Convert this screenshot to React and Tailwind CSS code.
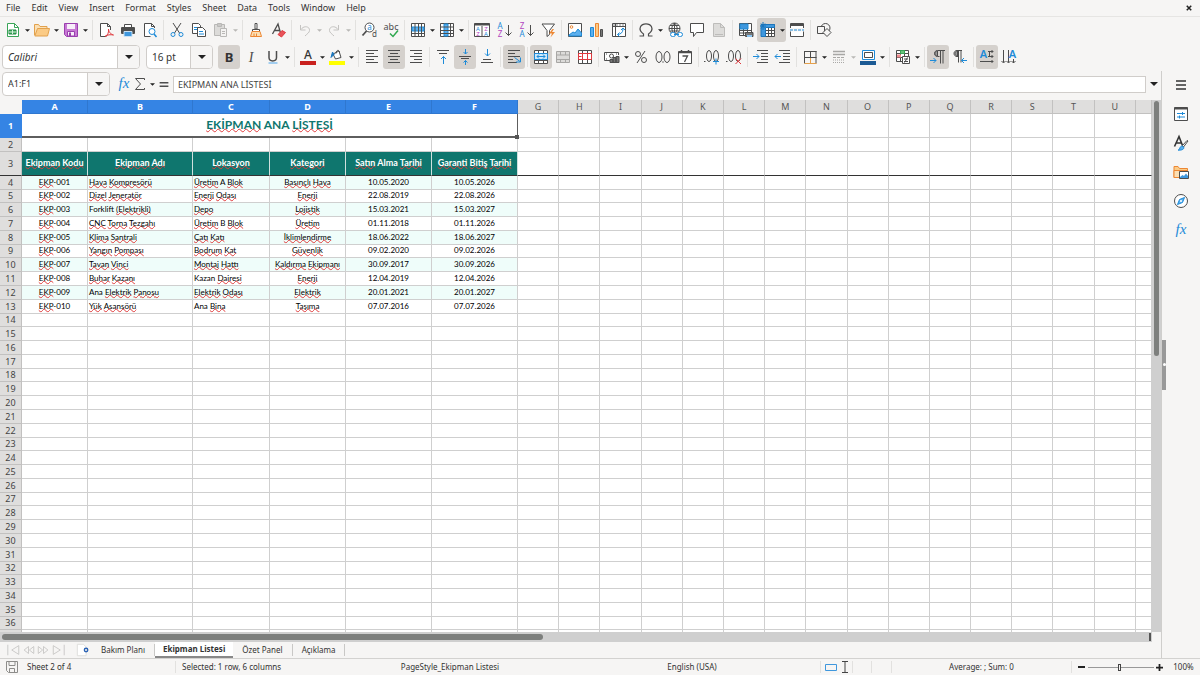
import { Fragment } from 'react';
import clsx from 'clsx';

const INK = '#4d4d4d';
const BLUE = '#1e8bd8';
const RED = '#e0393e';
const ORANGE = '#ed8733';
const PURPLE = '#b144c0';

const MENUS = ['File', 'Edit', 'View', 'Insert', 'Format', 'Styles', 'Sheet', 'Data', 'Tools', 'Window', 'Help'];

const Glyph = ({ x = 8, y = 12, size = 12, fill = INK, children, ...rest }) => (
  <text x={x} y={y} fontSize={size} fill={fill} stroke="none" textAnchor="middle" {...rest}>
    {children}
  </text>
);

const ICONS = {
  new: (
    <>
      <path d="M2.500 1.500h7l4 4v9h-11z" fill="#fff" stroke="#3aa558" />
      <path d="M9.500 1.500v4h4" stroke="#3aa558" />
      <path d="M4 8h7v4H4z" fill="#3aa558" stroke="#1f8a41" />
      <path d="M4 10h7M7.500 8v4" stroke="#d5f0dc" />
    </>
  ),
  open: (
    <>
      <path d="M.5 13V2.500h4l1.500 2h7V7" fill="#fbe0b5" stroke="#e2a14c" />
      <path d="M3.500 6.500h12l-2 7.500H.8z" fill="#fbcb86" stroke="#e2a14c" />
    </>
  ),
  save: (
    <>
      <path d="M1.500 1.500h13v13h-11l-2-2z" fill="#c778d4" stroke="#9a3fae" />
      <path d="M4 2h8v5H4z" fill="#f7eef9" stroke="none" />
      <path d="M4.500 14V9.500h7V14z" fill="#f7eef9" stroke="#9a3fae" />
      <path d="M6 10.500h2V14H6z" fill="#9a3fae" stroke="none" />
    </>
  ),
  pdf: (
    <>
      <path d="M12.500 8V4.500l-3-3h-7v13h6" fill="#fff" />
      <path d="M9.500 1.500v3h3" />
      <path d="M7 14.500c3-1 4-5 3.500-7.500.5 4 2.500 5 5 6-3-.5-6-.5-8.500 1.500z" stroke={RED} />
    </>
  ),
  print: (
    <>
      <path d="M4.500 5V2.500h7V5" fill="#fff" />
      <rect x="1" y="5" width="14" height="7" rx="1" fill="#4d4d4d" stroke="none" />
      <path d="M4 9.500h8v5H4z" fill="#3f97dd" stroke="#c9e1f4" />
    </>
  ),
  preview: (
    <>
      <path d="M12.500 6V4.500l-3-3h-7v13h6" fill="#fff" />
      <path d="M9.500 1.500v3h3" />
      <circle cx="10" cy="9.500" r="3" fill="#fff" stroke={BLUE} />
      <path d="M12 12l2.500 3" stroke={BLUE} strokeWidth="1.500" />
    </>
  ),
  cut: (
    <>
      <path d="M4 1l6.500 10M12 1L5.500 11" />
      <circle cx="4" cy="12.500" r="2" stroke={BLUE} />
      <circle cx="12" cy="12.500" r="2" stroke={BLUE} />
    </>
  ),
  copy: (
    <>
      <path d="M1.500 1.500h6l2 2v8h-8z" fill="#fff" />
      <path d="M3 5.500h4M3 7.500h3" stroke={BLUE} />
      <path d="M6.500 5.500h5l3 3v6h-8z" fill="#fff" />
      <path d="M8 9.500h4M8 12h5" stroke={BLUE} />
    </>
  ),
  paste: (
    <g stroke="#b9b8b6">
      <path d="M1.500 2.500h10v11h-10z" fill="#dcdbd9" />
      <path d="M4.500 1.500h4v3h-4z" fill="#c9c8c6" />
      <path d="M7.500 6.500h6v8h-6z" fill="#f4f3f2" />
      <path d="M9 9.500h3M9 11.500h3" />
    </g>
  ),
  brush: (
    <>
      <path d="M7 1.500h2V7H7z" fill="#fff" />
      <path d="M4.500 7.500h7v2h-7z" fill="#fff" />
      <path d="M4 9.500h8l1.500 5h-11z" fill="#fbdfb4" stroke={ORANGE} />
      <path d="M6 14.500v-3M8.500 14.500v-3" stroke={ORANGE} />
    </>
  ),
  clear: (
    <>
      <path d="M2.500 12L8 2l2.500 9M4.500 8.500h5" strokeWidth="1.300" />
      <path d="M8 12.500l4-4 3.500 2-4 4.500z" fill="#e8535a" stroke={RED} />
    </>
  ),
  undo: <path d="M3.500 3v5h5M4 7.500C7 3 13 4.500 12.500 8.500c0 2-2 3-4.500 5.500" stroke="#c4c3c1" />,
  redo: <path d="M12.500 3v5h-5M12 7.500C9 3 3 4.500 3.500 8.500c0 2 2 3 4.500 5.500" stroke="#c4c3c1" />,
  find: (
    <>
      <circle cx="8.500" cy="5.500" r="4.500" fill="#fff" />
      <path d="M5.500 9L1.500 13.500" strokeWidth="1.800" />
      <Glyph x="8.500" y="8" size="8" fill={BLUE}>a</Glyph>
      <Glyph x="13.500" y="15" size="8">d</Glyph>
    </>
  ),
  spell: (
    <>
      <Glyph y="8" size="9">abc</Glyph>
      <path d="M7 11.500l3 3L15 8.500" stroke="#2fa84f" strokeWidth="1.500" />
    </>
  ),
  row: (
    <>
      <path d="M1.500 1.500h13v13h-13z" fill="#fff" />
      <path d="M2 5h12v4H2z" fill="#5db0ee" stroke={BLUE} />
      <path d="M5 2v12M8.500 2v12M11.500 2v12M2 11.500h12" />
    </>
  ),
  column: (
    <>
      <path d="M1.500 1.500h13v13h-13z" fill="#fff" />
      <path d="M5 2h4v12H5z" fill="#5db0ee" stroke={BLUE} />
      <path d="M2 5h12M2 8.500h12M2 11.500h12M11.500 2v12" />
    </>
  ),
  sort: (
    <>
      <path d="M.5 1.500h15v13H.5zM8 4v10" fill="#fff" />
      <path d="M.5 2.500h15" strokeWidth="2" />
      <Glyph x="4" y="9" size="6" fill={BLUE}>A</Glyph>
      <Glyph x="4" y="14" size="6" fill={PURPLE}>Z</Glyph>
      <Glyph x="12" y="9" size="6" fill={PURPLE}>Z</Glyph>
      <Glyph x="12" y="14" size="6" fill={BLUE}>A</Glyph>
    </>
  ),
  sortAsc: (
    <>
      <Glyph x="4" y="7" size="8" fill={BLUE}>A</Glyph>
      <Glyph x="4" y="15" size="8" fill={PURPLE}>Z</Glyph>
      <path d="M12.500 3v10.500M9.500 10.500l3 3 3-3" />
    </>
  ),
  sortDesc: (
    <>
      <Glyph x="4" y="7" size="8" fill={PURPLE}>Z</Glyph>
      <Glyph x="4" y="15" size="8" fill={BLUE}>A</Glyph>
      <path d="M12.500 3v10.500M9.500 10.500l3 3 3-3" />
    </>
  ),
  filter: (
    <>
      <path d="M2 2h12.500L9.500 8.500v4l-2.500 2v-6z" fill="#fff" />
      <path d="M12.500 7L9 11.500h3L10.500 15.500l4.500-5.500h-3l2-3z" fill={ORANGE} stroke="none" />
    </>
  ),
  image: (
    <>
      <path d="M1.500 1.500h13v13h-13z" fill="#fff" />
      <circle cx="4.500" cy="5" r="1.300" stroke={ORANGE} />
      <path d="M2 13l4-3 2 1 3-4 3.500 4v3H2z" fill="#5db0ee" stroke={BLUE} />
    </>
  ),
  chart: (
    <>
      <path d="M1.500 5.500h3v9h-3z" fill="#5db0ee" stroke={BLUE} />
      <path d="M6.500 1.500h3v13h-3z" fill="#fbcb86" stroke={ORANGE} />
      <path d="M11.500 7.500h2v7h-2z" fill="#777" />
    </>
  ),
  pivot: (
    <>
      <path d="M1.500 1.500h13v13h-13zM4.500 2v12M2 4.500h12" fill="#fff" />
      <path d="M2 3h12" stroke="#888" strokeDasharray="2 1" />
      <path d="M6.500 12.500c3 0 5.500-2 5.500-5.500M10 8l2-2 2 2M8.500 10.500l-2 2 2 2" stroke={BLUE} />
    </>
  ),
  omega: <path d="M1.500 14h4v-2C2 9.500 1.500 7 2.500 4.800c2-4 9-4 11 0 1 2.200.5 4.700-3 7.200v2h4" strokeWidth="1.200" />,
  link: (
    <>
      <circle cx="7.500" cy="6.500" r="5.500" fill="#fff" />
      <path d="M2 6.500h11M7.500 1v11M3 3.500h9M3 9h9M7.500 1c-3.500 3-3.500 8 0 11 3.500-3 3.500-8 0-11" />
      <rect x="3.500" y="10.500" width="5" height="4" rx="2" fill="#fff" stroke={BLUE} />
      <rect x="10.500" y="10.500" width="5" height="4" rx="2" fill="#fff" stroke={BLUE} />
      <path d="M7 12.500h5" stroke={BLUE} />
    </>
  ),
  comment: <path d="M1.500 1.500h13v9h-7l-3 4v-4h-3z" fill="#fff" />,
  page: (
    <g stroke="#bdbcba">
      <path d="M2.500 1.500h7l4 4v9h-11z" fill="#dddcda" />
      <path d="M9.500 1.500v4h4M4 12.500h8" />
    </g>
  ),
  printRange: (
    <>
      <path d="M1.500 1.500h12v12h-12zM5.500 2v11M9.500 2v11M2 8.500h11M2 11h11" fill="#fff" />
      <path d="M2 2h8v5H2z" fill="#3f97dd" stroke={BLUE} />
      <path d="M7.500 10.500h7.500v4H7.500z" fill="#777" />
      <path d="M9 13h5v2H9z" fill="#8cc6f3" stroke="none" />
    </>
  ),
  freeze: (
    <>
      <path d="M1.500 2.500h13v12h-13zM8.500 3v11M11.500 3v11M2 8.500h12M2 11.500h12" fill="#fff" />
      <path d="M1 2.500h13.500v3H5.500v9H1z" fill="#3f97dd" stroke="#1b76bd" />
      <path d="M3 0v8M0 4h6M1 1.500l4 5M5 1.500l-4 5" stroke="#1b76bd" />
    </>
  ),
  split: (
    <>
      <path d="M1.500 6V1.500h13V6M1.500 9.500v5h13v-5" fill="#fff" />
      <path d="M1.500 3h13" strokeWidth="2" />
      <path d="M1 8h14" stroke={BLUE} strokeDasharray="3 1" />
    </>
  ),
  shapes: (
    <>
      <circle cx="9.500" cy="6" r="4.500" />
      <path d="M1.500 4.500h7v7h-7z" fill="#f6f5f4" />
      <path d="M11 6.500l4 4-4 4-4-4z" fill="#f6f5f4" />
    </>
  ),
  bold: <Glyph y="13" size="13" fontWeight="700" fill="#333">B</Glyph>,
  italic: <Glyph y="13" size="14" fontStyle="italic" fontFamily="Liberation Serif, serif">I</Glyph>,
  underline: (
    <>
      <path d="M4 2v6.500c0 4.500 7.500 4.500 7.500 0V2" strokeWidth="1.500" />
      <path d="M3.500 14h9" stroke="#6cb4ec" strokeWidth="1.200" />
    </>
  ),
  fontColor: (
    <>
      <Glyph y="10" size="12" fill="#333" fontWeight="500">A</Glyph>
      <path d="M0 12h16v4H0z" fill="#c9211e" stroke="none" />
    </>
  ),
  fill: (
    <>
      <path d="M4 5l6-3 2 6.500L6.500 10z" fill="#fff" />
      <path d="M7 4.500c0-4 3.500-4 3.500-1" />
      <path d="M3.500 3L2 8.500 5 5.500z" fill="#1b76bd" stroke="#1b76bd" />
      <path d="M0 12h16v4H0z" fill="#ffff00" stroke="none" />
    </>
  ),
  left: <path d="M2 1.500h12M2 4.500h8M2 7.500h12M2 10.500h8M2 13.500h12" />,
  center: <path d="M2 1.500h12M4 4.500h8M2 7.500h12M4 10.500h8M2 13.500h12" />,
  right: <path d="M2 1.500h12M6 4.500h8M2 7.500h12M6 10.500h8M2 13.500h12" />,
  top: (
    <>
      <path d="M2 1.500h12M4 4.500h8" />
      <path d="M8.500 15V7.500M6 10l2.500-2.500L11 10" stroke={BLUE} />
    </>
  ),
  middle: (
    <>
      <path d="M2 7.500h12M4 9.500h8" />
      <path d="M8.500 0v5M6.500 3l2 2 2-2M8.500 16v-4.500M6.500 13.500l2-2 2 2" stroke={BLUE} />
    </>
  ),
  bottom: (
    <>
      <path d="M2 13.500h12M4 10.500h8" />
      <path d="M8.500 0v7M6 4.500L8.500 7 11 4.500" stroke={BLUE} />
    </>
  ),
  wrap: (
    <>
      <path d="M2 1.500h12M2 4.500h7M2 7.500h12M2 10.500h5M2 13.500h9" />
      <path d="M8.500 8.500l5.500 4M14.500 8.500v4.500H10" stroke={BLUE} />
    </>
  ),
  merge: (
    <>
      <path d="M1.500 1.500h13v13h-13zM5.500 2v12M10.500 2v12M2 11.500h12" fill="#fff" />
      <path d="M1.500 4.500h13v6h-13z" fill="#cde8fb" stroke={BLUE} />
      <path d="M4 7.500h8M6 5.500l-2 2 2 2M10 5.500l2 2-2 2" stroke={BLUE} />
    </>
  ),
  mergeCells: <path d="M1.500 2.500h13v11h-13zM2 6h12M2 10.500h12M5.500 2v4M10.500 2v4M5.500 11v3M10.500 11v3" fill="#dcdbd9" stroke="#a8a7a5" />,
  unmerge: (
    <>
      <path d="M1.500 1.500h13v13h-13zM5.500 2v12M10.500 2v12" fill="#fff" />
      <path d="M1.500 4.500h13v6h-13zM5.500 5v5M10.500 5v5M1.500 7.500h3" stroke={RED} />
    </>
  ),
  currency: (
    <>
      <path d="M14.500 6V3.500h-14v8h6" fill="#fff" />
      <circle cx="7.500" cy="7" r="2" />
      <path d="M2 5h1M2 10h1M12 5h1" />
      <path d="M6 10.500h3v3H6zM9 8.500h3v5H9zM12 7.500h3v6h-3z" fill="#777" />
    </>
  ),
  percent: (
    <>
      <circle cx="5" cy="5" r="2.500" />
      <circle cx="11" cy="11" r="2.500" />
      <path d="M12 2L4 14" />
    </>
  ),
  number: (
    <>
      <ellipse cx="4" cy="8" rx="3" ry="5.500" />
      <ellipse cx="12" cy="8" rx="3" ry="5.500" />
      <path d="M7.500 13h1" strokeWidth="1.500" />
    </>
  ),
  date: (
    <>
      <path d="M1.500 2.500h13v12h-13z" fill="#fff" />
      <path d="M1.500 3.500h13M4.500 1v3M11.500 1v3" strokeWidth="1.500" />
      <path d="M5.500 7h5L7.500 13" strokeWidth="1.300" />
    </>
  ),
  addDecimal: (
    <>
      <path d="M0 12.500h1.500" />
      <ellipse cx="5" cy="7" rx="2.500" ry="5.500" />
      <ellipse cx="12" cy="7" rx="2.500" ry="5.500" />
      <path d="M9 12.500h6M12 9.500v6" stroke={BLUE} />
    </>
  ),
  delDecimal: (
    <>
      <path d="M0 12.500h1.500" />
      <ellipse cx="5" cy="7" rx="2.500" ry="5.500" />
      <ellipse cx="12" cy="7" rx="2.500" ry="5.500" />
      <path d="M9.500 9.500l5.500 5.500M15 9.500L9.500 15" stroke={RED} />
    </>
  ),
  indent: (
    <>
      <path d="M4 1.500h11M8 4.500h7M8 7.500h7M8 10.500h7M4 13.500h11" />
      <path d="M0 7.500h6M3.500 5L6 7.500 3.500 10" stroke={BLUE} />
    </>
  ),
  outdent: (
    <>
      <path d="M4 1.500h11M8 4.500h7M8 7.500h7M8 10.500h7M4 13.500h11" />
      <path d="M0 7.500h6M2.500 5L0 7.500 2.500 10" stroke={BLUE} />
    </>
  ),
  borders: (
    <>
      <path d="M2.500 2v12.500M14 2v12.500M8.500 2v12.500M2.500 8.500h12" />
      <path d="M2 2.500h12.500" />
      <path d="M8.500 9v5M2.500 14.500h12" stroke="#e5a04b" />
    </>
  ),
  borderStyle: (
    <g stroke="#a8a7a5">
      <path d="M2 2.500h12M2 5.500h12" strokeWidth="1.500" />
      <path d="M2 8.500h12" strokeDasharray="3 1" />
      <path d="M2 11h12M2 13.500h12" strokeDasharray="1 1" />
    </g>
  ),
  borderColor: (
    <>
      <path d="M2.500 1.500h12v9h-12z" fill="#fff" stroke={BLUE} />
      <path d="M4.500 3.500h8v5h-8z" />
      <path d="M0 12h16v4H0z" fill="#1c5a94" stroke="none" />
    </>
  ),
  conditional: (
    <>
      <path d="M1.500 1.500h12v11h-12zM2 4.500h11M2 8.500h11M5.500 2v10M9.500 2v10" fill="#fff" />
      <path d="M5.500 1.500h4v3h-4z" fill="#69c27c" stroke="#3aa558" />
      <path d="M2 5.500h4v3H2z" fill="#f08b8e" stroke="none" />
      <path d="M7.500 7.500h7v7h-7z" fill="#fff" />
      <path d="M9 10h4M9 12.500h4M12.500 8.500l-3 5" />
    </>
  ),
  ltr: (
    <>
      <path d="M15 1.500H7.500c-4 0-4 6 0 6h2M10.500 1.500v13M13 1.500v13" />
      <path d="M7.500 2v5C4 7 4 2 7.500 2z" fill="#999" />
      <path d="M0 11.500h6M3.500 9L6 11.500 3.500 14" stroke={BLUE} />
    </>
  ),
  rtl: (
    <>
      <path d="M10 1.500H5c-4 0-4 6 0 6h1M6.500 1.500v12M9 1.500v12" />
      <path d="M5.500 2v5C2 7 2 2 5.500 2z" fill="#999" />
      <path d="M9.500 11.500H15M12 9l-2.500 2.500L12 14" stroke={BLUE} />
    </>
  ),
  textRight: (
    <>
      <Glyph x="4.500" y="9" size="11" fill={BLUE} fontWeight="600">A</Glyph>
      <path d="M9 2.500h5M9 7.500h5M1 12.500h13M12.500 1l1.500 1.500L12.500 4M12.500 6l1.500 1.500L12.500 9M12.500 11l1.500 1.500-1.500 1.500M10.500 2.500v5" />
    </>
  ),
  textDown: (
    <>
      <path d="M2.500 1v12.500M7.500 1v12.500M12.500 10v4M.5 12l2 2 2-2M5.500 12l2 2 2-2M10.500 12l2 2 2-2" />
      <Glyph x="11.500" y="9" size="11" fill={BLUE} fontWeight="600">A</Glyph>
    </>
  ),
  // sidebar
  menu: <path d="M3 4h10M3 8h10M3 12h10" strokeWidth="1.500" stroke="#333" />,
  properties: (
    <>
      <path d="M1.500 1.500h13v13h-13z" fill="#fff" />
      <path d="M1.500 2.500h13" strokeWidth="2" />
      <path d="M4 7.500h8M4 11h8M9.500 6v3M6.500 9.500v3" stroke={BLUE} />
    </>
  ),
  styles: (
    <>
      <path d="M1.500 11.500L6 1.500l3.500 9M3 8h6" strokeWidth="1.600" stroke="#333" />
      <path d="M15 6l-4.500 6-1-1.500L14 5.500z" fill="#fff" />
      <path d="M9 11c-1 0-2 1-2.500 3-.5 1-1 1-1.500 1 3 .5 6-.5 6-2.500z" fill="#5db0ee" stroke={BLUE} />
    </>
  ),
  gallery: (
    <>
      <path d="M1 13.500v-11h4l1.500 2h8V7" fill="#fbcb86" stroke={ORANGE} />
      <path d="M1 6.500h13v7H1z" fill="#fbdfb4" stroke={ORANGE} />
      <path d="M6.500 7.500h9v7h-9z" fill="#fff" />
      <path d="M7 13l2.500-2 1.500 1 2-2.500 2 2.500v2H7z" fill="#3f97dd" stroke="none" />
    </>
  ),
  navigator: (
    <>
      <circle cx="8" cy="8" r="6.500" fill="#fff" />
      <path d="M11.500 4.500L9.500 9.500l-5 2 2-5z" fill="#5db0ee" stroke={BLUE} />
      <circle cx="8" cy="8" r="1" fill="#fff" stroke="none" />
    </>
  ),
  fx: (
    <Glyph y="12" size="15" fill={BLUE} fontStyle="italic" fontFamily="Liberation Serif, serif">fx</Glyph>
  ),
  sigma: <path d="M12.500 4V2.500h-9L8.500 8l-5 5.500h9V12" />,
  equals: <path d="M3 6.500h10M3 10.500h10" strokeWidth="1.600" />,
};

const Icon = ({ name, className = 'size-4' }) => (
  <svg viewBox="0 0 16 16" fill="none" stroke={INK} className={clsx('shrink-0 overflow-visible', className)} aria-hidden="true">
    {ICONS[name]}
  </svg>
);

const Caret = ({ faded, big }) => (
  <svg viewBox="0 0 8 4" className={big ? 'w-2 h-1' : 'w-[5px] h-[3px]'} aria-hidden="true">
    <path d="M0 0h8L4 4z" fill={faded ? '#b9b8b6' : '#222'} />
  </svg>
);

// '|' closes a group; menu: has a drop-down part next to the icon
const STANDARD = [
  { id: 'new', menu: true }, { id: 'open', menu: true }, { id: 'save', menu: true }, '|',
  { id: 'pdf' }, { id: 'print' }, { id: 'preview' }, '|',
  { id: 'cut' }, { id: 'copy' }, { id: 'paste', menu: true, faded: true }, '|',
  { id: 'brush' }, { id: 'clear' }, '|',
  { id: 'undo', menu: true, faded: true }, { id: 'redo', menu: true, faded: true }, '|',
  { id: 'find' }, { id: 'spell' }, '|',
  { id: 'row', menu: true }, { id: 'column', menu: true }, '|',
  { id: 'sort' }, { id: 'sortAsc' }, { id: 'sortDesc' }, { id: 'filter' }, '|',
  { id: 'image' }, { id: 'chart' }, { id: 'pivot' }, '|',
  { id: 'omega', menu: true }, { id: 'link' }, { id: 'comment' }, { id: 'page' }, '|',
  { id: 'printRange' }, { id: 'freeze', menu: true, on: true }, { id: 'split' }, '|',
  { id: 'shapes' },
];

const FORMATTING = [
  { id: 'bold', on: true }, { id: 'italic' }, { id: 'underline', menu: true }, '|',
  { id: 'fontColor', menu: true }, { id: 'fill', menu: true }, '|',
  { id: 'left' }, { id: 'center', on: true }, { id: 'right' }, '|',
  { id: 'top' }, { id: 'middle', on: true }, { id: 'bottom' }, '|',
  { id: 'wrap', on: true }, '|',
  { id: 'merge', on: true }, { id: 'mergeCells' }, { id: 'unmerge' }, '|',
  { id: 'currency', menu: true }, { id: 'percent' }, { id: 'number' }, { id: 'date' }, '|',
  { id: 'addDecimal' }, { id: 'delDecimal' }, '|',
  { id: 'indent' }, { id: 'outdent' }, '|',
  { id: 'borders', menu: true }, { id: 'borderStyle', menu: true, faded: true }, { id: 'borderColor', menu: true }, '|',
  { id: 'conditional', menu: true }, '|',
  { id: 'ltr', on: true }, { id: 'rtl' }, '|',
  { id: 'textRight', on: true }, { id: 'textDown' },
];

const Tools = ({ items }) =>
  items.map((item, i) =>
    item === '|' ? (
      <span key={i} className={clsx('h-5 shrink-0 flex justify-center', items[i - 1].menu ? 'w-[6px]' : 'w-[5px]')}>
        <span className="w-px bg-[#e2e1df]" />
      </span>
    ) : (
      <button
        key={i}
        type="button"
        aria-label={item.id}
        aria-pressed={item.on}
        className={clsx('h-6 shrink-0 flex items-center rounded-[3px]', item.on && 'bg-[#d5d1cd]')}
      >
        <span className="w-[22px] flex justify-center"><Icon name={item.id} /></span>
        {item.menu && <span className="w-[7px] flex justify-center"><Caret faded={item.faded} /></span>}
      </button>
    )
  );

const Combo = ({ label, value, className, inputClass }) => (
  <div className={clsx('shrink-0 flex bg-white border border-[#d0cdca] rounded-[4px] overflow-hidden', className)}>
    <input aria-label={label} defaultValue={value} className={clsx('min-w-0 flex-1 px-[5px] outline-none', inputClass)} />
    <button type="button" aria-label={`${label} list`} className="w-[22px] flex items-center justify-center bg-[#f6f5f4] border-l border-[#d0cdca]">
      <Caret big />
    </button>
  </div>
);

// '~' marks a word that the spell checker flags
const HEADERS = ['~Ekipman ~Kodu', '~Ekipman ~Adı', '~Lokasyon', '~Kategori', '~Satın Alma ~Tarihi', '~Garanti ~Bitiş ~Tarihi'];
const ROWS = [
  ['001', '~Hava ~Kompresörü', '~Üretim A ~Blok', '~Basınçlı ~Hava', '10.05.2020', '10.05.2026'],
  ['002', '~Dizel ~Jeneratör', '~Enerji ~Odası', '~Enerji', '22.08.2019', '22.08.2026'],
  ['003', 'Forklift ~(Elektrikli)', '~Depo', '~Lojistik', '15.03.2021', '15.03.2027'],
  ['004', '~CNC ~Torna ~Tezgahı', '~Üretim B ~Blok', '~Üretim', '01.11.2018', '01.11.2026'],
  ['005', '~Klima ~Santrali', '~Çatı ~Katı', '~İklimlendirme', '18.06.2022', '18.06.2027'],
  ['006', '~Yangın ~Pompası', '~Bodrum ~Kat', '~Güvenlik', '09.02.2020', '09.02.2026'],
  ['007', '~Tavan ~Vinci', '~Montaj ~Hattı', '~Kaldırma ~Ekipmanı', '30.09.2017', '30.09.2026'],
  ['008', '~Buhar ~Kazanı', 'Kazan ~Dairesi', '~Enerji', '12.04.2019', '12.04.2026'],
  ['009', 'Ana ~Elektrik ~Panosu', '~Elektrik ~Odası', '~Elektrik', '20.01.2021', '20.01.2027'],
  ['010', '~Yük ~Asansörü', 'Ana ~Bina', '~Taşıma', '07.07.2016', '07.07.2026'],
];
const LAST_ROW = 37;
const COLUMNS = 'ABCDEFGHIJKLMNOPQRSTUV'.split('');
const EMPTY_COLUMNS = COLUMNS.slice(6);
const COL_WIDTHS = ['w-[66px]', 'w-[105px]', 'w-[77px]', 'w-[76px]', 'w-[86px]', 'w-[86px]'];

const Flagged = ({ children }) => (
  <span className="underline decoration-wavy decoration-[#e03c3c] decoration-1 [text-underline-offset:-1px] [text-decoration-skip-ink:none]">{children}</span>
);

const Words = ({ text }) =>
  text.split(' ').map((word, i) => (
    <Fragment key={i}>
      {i > 0 && ' '}
      {word[0] === '~' ? <Flagged>{word.slice(1)}</Flagged> : word}
    </Fragment>
  ));

const cell = 'border-r border-b border-[#cfcfcf] p-0';
const dataCell = 'pb-px leading-[11px]';

const RowHead = ({ n, selected, className }) => (
  <th
    scope="row"
    className={clsx(
      'border-r border-b p-0 text-center font-[Noto_Sans,sans-serif] text-[9px]',
      selected ? 'bg-[#3584e4] text-white font-bold border-[#3584e4]' : 'bg-[#dfdedd] text-[#444] font-normal border-[#c2c1c0]',
      className
    )}
  >
    {n}
  </th>
);

const Empty = ({ from = 6, className }) =>
  COLUMNS.slice(from).map((c) => <td key={c} className={clsx(cell, className)} />);

const rowHeight = (n) => (n % 9 === 0 || n % 9 === 5 ? 'h-[13px]' : 'h-[14px]');

const Sheet = () => (
  <div className="flex-1 min-h-0 overflow-hidden bg-white">
    <table className="w-full table-fixed border-separate border-spacing-0 leading-[12px] whitespace-nowrap">
      <colgroup>
        <col className="w-[22px]" />
        {COL_WIDTHS.map((w, i) => <col key={i} className={w} />)}
        {EMPTY_COLUMNS.map((c) => <col key={c} className={c === 'V' ? 'w-[16px]' : ''} />)}
      </colgroup>
      <thead>
        <tr className="h-[14px] text-[9px]">
          <td className="p-0 bg-[#f6f5f4]" />
          {COLUMNS.map((c, i) => (
            <th
              key={c}
              scope="col"
              className={clsx(
                'p-0 border-r border-b',
                i < 6 ? 'bg-[#3584e4] text-white font-bold border-[#2f77cf]' : 'bg-[#dfdedd] text-[#555] font-normal border-[#c2c1c0]'
              )}
            >
              {c !== 'V' && c}
            </th>
          ))}
        </tr>
      </thead>
      <tbody className="font-[Lato,sans-serif] text-[8px] text-black">
        <tr className="h-6">
          <RowHead n={1} selected />
          <td colSpan={6} className="relative p-0 border-r border-b-2 border-[#5e5e5e] text-center text-[12px] leading-[20px] font-bold text-[#0f766e]">
            <Words text="~EKİPMAN ANA ~LİSTESİ" />
            <span className="absolute -right-[2px] -bottom-[3px] size-1 bg-[#555]" />
          </td>
          <Empty />
        </tr>
        <tr className="h-[14px]">
          <RowHead n={2} />
          <Empty from={0} />
        </tr>
        <tr className="h-6">
          <RowHead n={3} className="border-b-[#333]" />
          {HEADERS.map((h) => (
            <td key={h} className="p-0 pb-[2px] border-r border-r-[#cfe0de] border-b border-b-[#333] bg-[#0f766e] text-center text-[9px] font-bold text-white">
              <Words text={h} />
            </td>
          ))}
          <Empty className="border-b-[#333]" />
        </tr>
        {ROWS.map(([code, ...rest], i) => (
          <tr key={code} className={rowHeight(i + 4)}>
            <RowHead n={i + 4} />
            <td className={clsx(cell, dataCell, 'text-center', i % 2 === 0 && 'bg-[#effdfa]')}>
              <Flagged>EKP</Flagged>-{code}
            </td>
            {rest.map((text, j) => (
              <td key={j} className={clsx(cell, dataCell, j < 2 ? 'text-left pl-px' : 'text-center', i % 2 === 0 && 'bg-[#effdfa]')}>
                <Words text={text} />
              </td>
            ))}
            <Empty />
          </tr>
        ))}
        {Array.from({ length: LAST_ROW - 13 }, (_, i) => i + 14).map((n) => (
          <tr key={n} className={rowHeight(n)}>
            <RowHead n={n < LAST_ROW ? n : ''} />
            <Empty from={0} />
          </tr>
        ))}
      </tbody>
    </table>
  </div>
);

const NAV_ARROWS = ['M1.500 2v12M14 3L6 8l8 5V3', 'M8 4L3 8l5 4zM14 4L9 8l5 4z', 'M2 4l5 4-5 4zM8 4l5 4-5 4z', 'M14.500 2v12M2 3l8 5-8 5V3'];

const SheetTabs = () => (
  <div className="h-4 shrink-0 flex items-center bg-[#f6f5f4] text-[8px] text-[#333]">
    <div className="flex pl-[6px] w-[74px]">
      {NAV_ARROWS.map((d) => (
        <button key={d} type="button" aria-label="Move between sheets" className="w-[15px]">
          <svg viewBox="0 0 16 16" className="w-[15px] h-[14px]" fill="none" stroke="#c6c5c3"><path d={d} /></svg>
        </button>
      ))}
    </div>
    <button type="button" aria-label="Add sheet" className="w-[18px] flex justify-center">
      <svg viewBox="0 0 16 16" className="size-[14px]" fill="none">
        <path d="M1.500 1.500h7l3 3v10h-10z" fill="#fff" stroke="#dcdbd9" />
        <circle cx="11.500" cy="8" r="2" stroke="#2a62b5" strokeWidth="1.500" />
      </svg>
    </button>
    <button type="button" className="h-3 px-[9px] border-r border-[#c9c8c6] leading-[12px]">Bakım Planı</button>
    <button type="button" className="h-4 px-2 bg-white border-b-2 border-[#888] font-bold leading-[14px]">Ekipman Listesi</button>
    <button type="button" className="h-3 px-[9px] border-r border-[#c9c8c6] leading-[12px]">Özet Panel</button>
    <button type="button" className="h-3 px-[9px] border-r border-[#c9c8c6] leading-[12px]">Açıklama</button>
  </div>
);

const StatusBar = () => (
  <footer className="h-[17px] shrink-0 grid grid-cols-[175fr_220fr_110fr_59fr_256fr_32fr_19fr_20fr_180fr_96fr_33fr] items-center border-t border-[#d3d2d0] text-[8px] text-[#333] whitespace-nowrap">
    <div className="flex items-center gap-[9px] pl-[6px]">
      <svg viewBox="0 0 12 12" className="size-3" fill="none" stroke="#8d8c8a">
        <path d="M.5.5h11v11h-9l-2-2zM3 1v3.500h6V1M3.500 11V7.500h5V11" />
      </svg>
      Sheet 2 of 4
    </div>
    <div className="pl-[6px] border-l border-[#e2e1df]">Selected: 1 row, 6 columns</div>
    <div className="text-center">PageStyle_Ekipman Listesi</div>
    <div />
    <div className="text-center">English (USA)</div>
    <div className="h-3 flex items-center justify-center gap-[5px] border-l border-[#e2e1df]">
      <svg viewBox="0 0 12 8" className="w-3 h-2" fill="none" stroke="#3f97dd"><path d="M.5 1.500h11v6H.5z" /></svg>
      <svg viewBox="0 0 6 12" className="w-[6px] h-3" fill="none" stroke="#444"><path d="M0 .5h6M3 0v12M0 11.500h6" /></svg>
    </div>
    <div className="h-3 border-l border-[#e2e1df]" />
    <div className="h-3 border-l border-[#e2e1df]" />
    <div className="h-3 leading-[12px] text-center border-l border-[#e2e1df]">Average: ; Sum: 0</div>
    <div className="h-3 flex items-center justify-between pl-[6px] pr-1 border-l border-[#e2e1df]">
      <button type="button" aria-label="Zoom out" className="w-[7px] h-[2px] bg-[#222]" />
      <input
        type="range"
        aria-label="Zoom"
        defaultValue="48"
        className="w-[66px] h-2 appearance-none bg-transparent [&::-webkit-slider-runnable-track]:h-px [&::-webkit-slider-runnable-track]:bg-[#999] [&::-webkit-slider-thumb]:appearance-none [&::-webkit-slider-thumb]:w-[3px] [&::-webkit-slider-thumb]:h-[7px] [&::-webkit-slider-thumb]:-mt-[3px] [&::-webkit-slider-thumb]:bg-[#f6f5f4] [&::-webkit-slider-thumb]:border [&::-webkit-slider-thumb]:border-[#444]"
      />
      <button type="button" aria-label="Zoom in" className="size-[7px] flex items-center justify-center">
        <svg viewBox="0 0 8 8" className="size-[7px]" stroke="#222" strokeWidth="2"><path d="M4 0v8M0 4h8" /></svg>
      </button>
    </div>
    <div className="text-center">100%</div>
  </footer>
);

const App = () => {
  return (
    <div className="h-screen flex flex-col overflow-hidden bg-[#f6f5f4] font-[Noto_Sans,sans-serif] text-[#333]">
      <nav className="h-[17px] shrink-0 flex items-center gap-[11px] pl-[6px] pr-2 border-b border-[#e6e5e3] text-[9px]">
        {MENUS.map((m) => <button key={m} type="button">{m}</button>)}
        <button type="button" aria-label="Close document" className="ml-auto">
          <svg viewBox="0 0 8 8" className="size-[6px]" stroke="#222" strokeWidth="2"><path d="M1 1l6 6M7 1L1 7" /></svg>
        </button>
      </nav>

      <div className="h-[26px] shrink-0 flex items-center pl-[2px]">
        <Tools items={STANDARD} />
      </div>

      <div className="h-[28px] shrink-0 flex items-center pl-[2px]">
        <Combo label="Font name" value="Calibri" className="w-[138px] h-6" inputClass="italic text-[10px]" />
        <Combo label="Font size" value="16 pt" className="w-[67px] h-6 ml-[6px] mr-[5px]" inputClass="text-[10px]" />
        <Tools items={FORMATTING} />
      </div>

      <div className="flex-1 min-h-0 flex">
        <main className="flex-1 min-w-0 flex flex-col">
          <div className="h-[29px] shrink-0 flex items-center pl-[2px] pb-[3px]">
            <Combo label="Name box" value="A1:F1" className="w-[108px] h-6" inputClass="text-[9px]" />
            <div className="flex items-center pl-[6px]">
              <button type="button" aria-label="Function wizard"><Icon name="fx" /></button>
              <button type="button" aria-label="Select function" className="flex items-center gap-[2px]">
                <Icon name="sigma" />
                <Caret />
              </button>
              <button type="button" aria-label="Formula" className="px-[2px]"><Icon name="equals" className="size-[14px]" /></button>
            </div>
            <input
              aria-label="Formula input"
              defaultValue="EKİPMAN ANA LİSTESİ"
              className="flex-1 min-w-0 h-[17px] px-1 bg-white border border-[#d0cdca] text-[9px] text-[#444] outline-none"
            />
            <button type="button" aria-label="Expand formula bar" className="w-[15px] flex justify-center"><Caret big /></button>
          </div>

          <div className="flex-1 min-h-0 flex">
            <Sheet />
            <div className="w-[9px] shrink-0 px-[2px] pt-px bg-[#cfcfcf]">
              <div className="h-12/25 bg-[#7d7f7d] rounded-full" />
            </div>
          </div>

          <div className="h-[10px] shrink-0 flex items-center bg-[#cfcfcf] mr-[9px] pl-[2px]">
            <div className="w-[47%] h-[6px] bg-[#7d7f7d] rounded-full" />
            <div className="ml-auto mr-px w-[2px] h-2 bg-[#555]" />
          </div>
          <SheetTabs />
        </main>

        <aside className="w-[39px] shrink-0 flex border-l border-[#cfcecc]">
          <button type="button" aria-label="Hide sidebar" className="self-center w-1 h-[50px] bg-[#999] flex items-center justify-center">
            <span className="size-[3px] rounded-full bg-white" />
          </button>
          <div className="flex flex-col gap-[13px] pt-[6px] pl-[7px]">
            {['menu', 'properties', 'styles', 'gallery', 'navigator', 'fx'].map((name) => (
              <button key={name} type="button" aria-label={name}><Icon name={name} /></button>
            ))}
          </div>
        </aside>
      </div>

      <StatusBar />
    </div>
  );
};

export default App;
